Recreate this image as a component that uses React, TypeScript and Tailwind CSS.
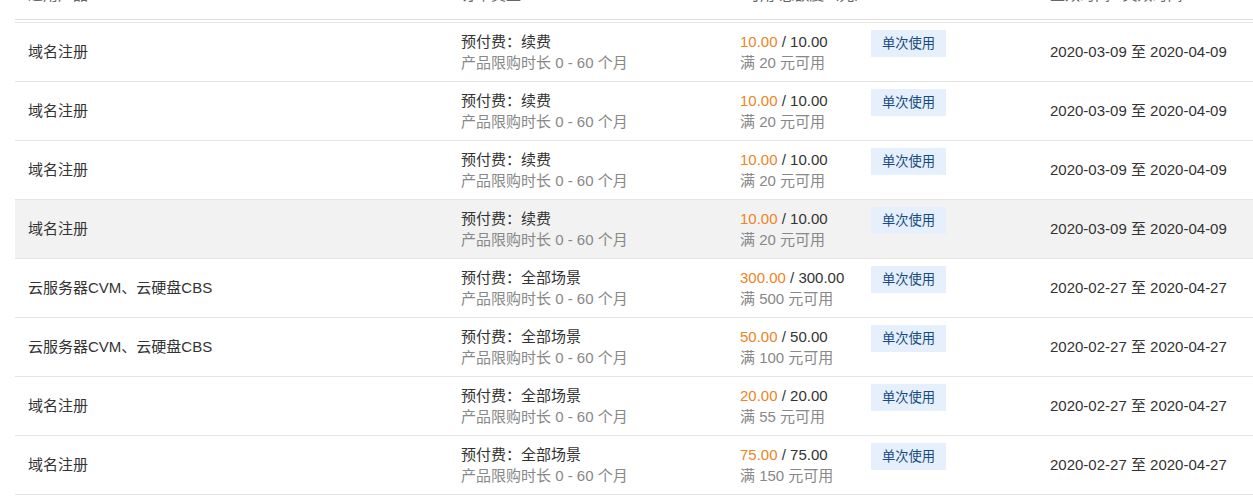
import React from "react";

type Row = {
  product: string;
  scene: string;
  left: string;
  total: string;
  min: string;
  start: string;
  end: string;
  active?: boolean;
};

const rows: Row[] = [
  { product: "域名注册", scene: "续费", left: "10.00", total: "10.00", min: "20", start: "2020-03-09", end: "2020-04-09" },
  { product: "域名注册", scene: "续费", left: "10.00", total: "10.00", min: "20", start: "2020-03-09", end: "2020-04-09" },
  { product: "域名注册", scene: "续费", left: "10.00", total: "10.00", min: "20", start: "2020-03-09", end: "2020-04-09" },
  { product: "域名注册", scene: "续费", left: "10.00", total: "10.00", min: "20", start: "2020-03-09", end: "2020-04-09", active: true },
  { product: "云服务器CVM、云硬盘CBS", scene: "全部场景", left: "300.00", total: "300.00", min: "500", start: "2020-02-27", end: "2020-04-27" },
  { product: "云服务器CVM、云硬盘CBS", scene: "全部场景", left: "50.00", total: "50.00", min: "100", start: "2020-02-27", end: "2020-04-27" },
  { product: "域名注册", scene: "全部场景", left: "20.00", total: "20.00", min: "55", start: "2020-02-27", end: "2020-04-27" },
  { product: "域名注册", scene: "全部场景", left: "75.00", total: "75.00", min: "150", start: "2020-02-27", end: "2020-04-27" },
];

const cols = "grid grid-cols-[446px_279px_131px_179px_1fr]";

export default function App() {
  return (
    <div
      className="min-h-[498px] bg-white overflow-hidden text-[15px] leading-[21px] text-[#333]"
      style={{ fontFamily: '"Liberation Sans", "Noto Sans CJK SC", sans-serif' }}
    >
      <div className="-mt-[31px] ml-[15px]">
        {/* Header (scrolled mostly out of view) */}
        <div className={`${cols} h-[51px] items-center border-b border-[#dedede] text-[#666]`}>
          <div className="pl-[13px]">适用产品 ▾</div>
          <div>订单类型 ▾</div>
          <div className="col-span-2 pl-[5px]">可用/总额度（元）▾</div>
          <div className="flex items-center gap-2">
            生效时间 / 失效时间
            <svg width="8" height="10" viewBox="0 0 8 10" className="text-[#bbb]">
              <path d="M4 0L7.5 4H0.5z M4 10L0.5 6H7.5z" fill="currentColor" />
            </svg>
          </div>
        </div>
        <div className="h-[2px]" />

        {/* Body */}
        <div className="border-t border-[#e5e5e5]">
          {rows.map((r, i) => (
            <div
              key={i}
              className={`${cols} h-[59px] items-center border-b border-[#e5e5e5] ${r.active ? "bg-[#f2f2f2]" : ""}`}
            >
              <div className="pl-[13px] -mt-px">{r.product}</div>
              <div className="-mt-px">
                <div>预付费：{r.scene}</div>
                <div className="text-[#888]">产品限购时长 0 - 60 个月</div>
              </div>
              <div className="-mt-px">
                <div>
                  <span className="text-[#ee8424]">{r.left}</span> / {r.total}
                </div>
                <div className="text-[#888]">满 {r.min} 元可用</div>
              </div>
              <div className="self-start pt-[7px]">
                <span className="inline-flex h-[27px] w-[75px] items-center justify-center bg-[#e5f0fc] text-[13.3px] text-[#164a80]">
                  单次使用
                </span>
              </div>
              <div className="-mt-px">
                {r.start} 至 {r.end}
              </div>
            </div>
          ))}
        </div>
      </div>
    </div>
  );
}
